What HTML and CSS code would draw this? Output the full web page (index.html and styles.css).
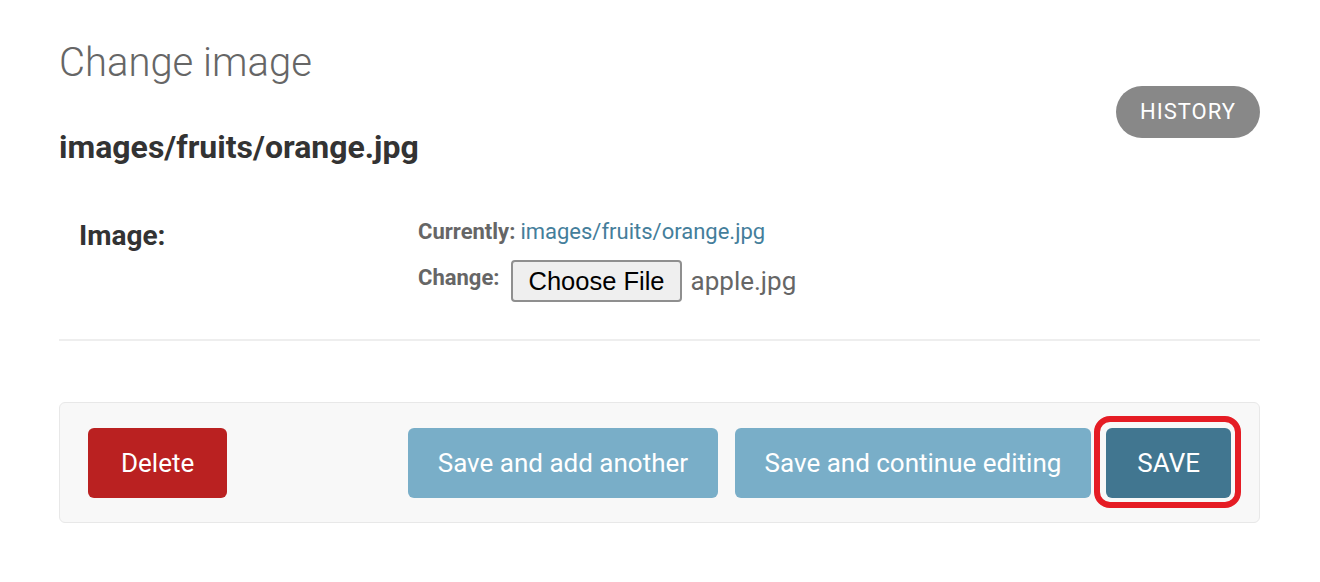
FILE: index.html
```html
<!DOCTYPE html>
<html lang="en">
<head>
<meta charset="utf-8">
<title>Change image</title>
<link rel="stylesheet" href="styles.css">
</head>
<body>
<div class="content">
  <h1 class="title">Change image</h1>
  <div class="head-row">
    <h2 class="subtitle">images/fruits/orange.jpg</h2>
    <a class="history" href="#">History</a>
  </div>
  <div class="form-row">
    <div class="label">Image:</div>
    <div class="field">
      <p class="line"><span class="key">Currently:</span> <a class="link" href="#">images/fruits/orange.jpg</a></p>
      <p class="line change"><span class="key">Change:</span> <span class="file"><span class="choose">Choose File</span><span class="fname">apple.jpg</span></span></p>
    </div>
  </div>
  <div class="submit-row">
    <a class="btn delete" href="#">Delete</a>
    <span class="btn light add">Save and add another</span>
    <span class="btn light cont">Save and continue editing</span>
    <span class="save-wrap"><span class="btn save">SAVE</span><span class="ring"></span></span>
  </div>
</div>
</body>
</html>
```

FILE: styles.css
```css
* { box-sizing: border-box; }
html, body { margin: 0; padding: 0; background: #fff; }
body {
  font-family: Roboto, "Liberation Sans", Arial, sans-serif;
  color: #333;
  width: 1320px;
  height: 582px;
  overflow: hidden;
}
.content {
  padding: 37px 60px 0 59px;
}
.title {
  margin: 0;
  font-weight: 300;
  font-size: 40px;
  line-height: 52px;
  color: #666;
}
.head-row {
  display: flex;
  justify-content: space-between;
  align-items: flex-start;
}
.subtitle {
  margin: 38px 0 0 0;
  font-size: 32px;
  font-weight: 700;
  line-height: 40px;
  color: #333;
}
.history {
  margin-top: -3px;
  display: block;
  width: 144px;
  height: 52px;
  line-height: 52px;
  text-align: center;
  background: #888;
  color: #fff;
  border-radius: 26px;
  font-size: 22px;
  letter-spacing: 1px;
  text-transform: uppercase;
  text-decoration: none;
}
.form-row {
  margin-top: 40px;
  display: grid;
  grid-template-columns: 339px 1fr;
  padding: 9px 20px 20px 20px;
  border-bottom: 2px solid #eee;
  height: 134px;
}
.label {
  font-size: 28px;
  font-weight: 700;
  color: #333;
  line-height: 36px;
  padding-top: 2px;
}
.field { display: flex; flex-direction: column; gap: 14px; }
.line {
  margin: 0;
  font-size: 22px;
  line-height: 32px;
  color: #666;
  display: flex;
  align-items: center;
  gap: 5px;
}
.key { font-weight: 700; color: #666; }
.link { color: #447e9b; text-decoration: none; }
.change { align-items: flex-start; }
.file { display: flex; align-items: center; margin-left: 7px; margin-top: -2px; }
.choose {
  font-family: "Liberation Sans", Arial, sans-serif;
  font-size: 25.5px;
  color: #000;
  background: #efefef;
  border: 2px solid #8f8f8f;
  border-radius: 4px;
  height: 42px;
  line-height: 38px;
  padding: 0 15px;
}
.fname {
  margin-left: 9px;
  font-size: 26px;
  color: #666;
}
.submit-row {
  margin-top: 61px;
  height: 121px;
  background: #f8f8f8;
  border: 1.5px solid #e8e8e8;
  border-radius: 6px;
  padding: 24px 28px;
  display: flex;
  align-items: center;
  gap: 15px;
}
.btn {
  display: block;
  height: 70px;
  line-height: 70px;
  padding: 0 30px;
  border-radius: 6px;
  color: #fff;
  font-size: 26px;
  text-decoration: none;
  white-space: nowrap;
}
.delete { background: #ba2121; margin-right: auto; padding: 0 33px; }
.light { background: #79aec8; }
.add { padding: 0 29.5px; }
.cont { margin-left: 2px; padding: 0 30px; }
.save { background: #417690; padding: 0 31px; }
.save-wrap { position: relative; display: block; }
.ring {
  position: absolute;
  left: -12px;
  top: -12px;
  right: -10px;
  bottom: -10px;
  border: 6px solid #e51c24;
  border-radius: 16px;
}
```
